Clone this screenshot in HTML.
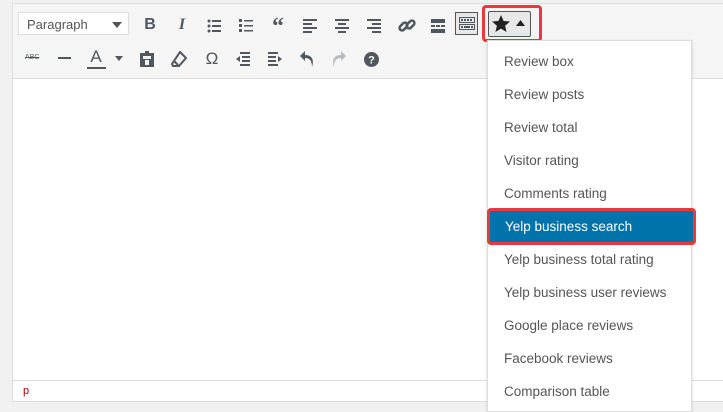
<!DOCTYPE html>
<html><head><style>
body{margin:0;width:723px;height:403px;background:#f1f1f1;position:relative;overflow:hidden;font-family:"Liberation Sans",sans-serif}
.ed{position:absolute;left:12px;top:3px;width:720px;height:397px;border:1px solid #ddd;background:#fff}
.tb{position:absolute;left:0;top:0;right:0;height:74px;background:#f5f5f5;border-bottom:1px solid #ddd}
.sel{position:absolute;left:5px;top:8px;width:111px;height:23px;background:#fff;border:1px solid #ddd;font-size:13px;color:#555;line-height:23px;padding-left:8px;box-sizing:border-box}
.sel:after{content:"";position:absolute;right:6px;top:9px;border:5px solid transparent;border-top:6px solid #555;border-bottom:0}
.i{position:absolute;color:#50575e;font-size:16px;text-align:center;width:24px;line-height:20px}
svg{position:absolute}
.st{position:absolute;left:0;right:0;top:376px;border-top:1px solid #ddd;height:20px;font-size:11px;color:#a00;padding-left:10px;line-height:20px}
.dd{position:absolute;left:487px;top:40px;width:203px;height:370px;background:#fff;border:1px solid #ddd;box-shadow:0 1px 3px rgba(0,0,0,.15)}
.it{height:33px;line-height:33px;padding-left:16px;font-size:13.5px;color:#555}
.hl{background:#0073aa;color:#fff;outline:3px solid #e9383f;outline-offset:-1px;position:relative;margin-left:1px;margin-right:-3px;border-radius:2px}
</style></head><body>
<div class="ed">
<div class="tb">
<div class="sel">Paragraph</div>
<div class="i" style="left:125px;top:11px;font-weight:bold">B</div>
<div class="i" style="left:157px;top:11px;font-style:italic;font-family:'Liberation Serif';font-weight:bold">I</div>
<svg style="left:194px;top:15px" width="14" height="14"><g fill="#50575e"><circle cx="2" cy="2" r="1.5"/><circle cx="2" cy="7" r="1.5"/><circle cx="2" cy="12" r="1.5"/><rect x="5" y="1" width="9" height="2"/><rect x="5" y="6" width="9" height="2"/><rect x="5" y="11" width="9" height="2"/></g></svg>
<svg style="left:226px;top:15px" width="14" height="14"><g fill="#50575e"><rect x="0" y="0" width="3" height="3"/><rect x="0" y="5" width="3" height="3"/><rect x="0" y="10" width="3" height="3"/><rect x="5" y="1" width="9" height="1.5"/><rect x="5" y="6" width="9" height="1.5"/><rect x="5" y="11" width="9" height="1.5"/></g></svg>
<div class="i" style="left:253px;top:13px;font-weight:bold;font-size:24px;font-family:'Liberation Serif'">“</div>
<svg style="left:290px;top:15px" width="14" height="14"><g fill="#50575e"><rect y="0" width="14" height="2"/><rect y="4" width="9" height="2"/><rect y="8" width="14" height="2"/><rect y="12" width="9" height="2"/></g></svg>
<svg style="left:322px;top:15px" width="14" height="14"><g fill="#50575e"><rect y="0" width="14" height="2"/><rect x="3" y="4" width="8" height="2"/><rect y="8" width="14" height="2"/><rect x="3" y="12" width="8" height="2"/></g></svg>
<svg style="left:354px;top:15px" width="14" height="14"><g fill="#50575e"><rect y="0" width="14" height="2"/><rect x="5" y="4" width="9" height="2"/><rect y="8" width="14" height="2"/><rect x="5" y="12" width="9" height="2"/></g></svg>
<svg style="left:385px;top:13px" width="18" height="18"><g fill="none" stroke="#50575e" stroke-width="2.5"><rect x="1" y="7" width="9" height="5" rx="2.5" transform="rotate(-45 5.5 9.5)"/><rect x="8" y="5" width="9" height="5" rx="2.5" transform="rotate(-45 12.5 7.5)"/></g></svg>
<svg style="left:418px;top:15px" width="14" height="14"><g fill="#50575e"><rect y="0" width="14" height="4"/><rect y="6" width="4" height="2"/><rect x="5" y="6" width="4" height="2"/><rect x="10" y="6" width="4" height="2"/><rect y="10" width="14" height="4"/></g></svg>
<div style="position:absolute;left:442px;top:8px;width:23px;height:23px;border:1px solid #555;background:#e8e8e8;box-sizing:border-box"></div>
<svg style="left:446px;top:13px" width="16" height="14"><g fill="none" stroke="#50575e"><rect x=".5" y=".5" width="15" height="5"/><rect x=".5" y="7.5" width="15" height="5"/></g><g fill="#50575e"><rect x="2" y="2" width="2" height="2"/><rect x="5" y="2" width="2" height="2"/><rect x="8" y="2" width="2" height="2"/><rect x="11" y="2" width="2" height="2"/><rect x="2" y="9" width="2" height="2"/><rect x="5" y="9" width="6" height="2"/><rect x="12" y="9" width="2" height="2"/></g></svg>
<div style="position:absolute;left:469px;top:1px;width:60px;height:37px;border:3px solid #e9383f;border-radius:4px;box-sizing:border-box"></div>
<div style="position:absolute;left:475px;top:7px;width:43px;height:26px;border:1px solid #555;border-radius:2px;background:#e8e8e8;box-sizing:border-box"></div>
<svg style="left:478px;top:10px" width="20" height="20"><path d="M10 1l2.6 6 6.4.5-4.9 4.2 1.5 6.3L10 14.6 4.4 18l1.5-6.3L1 7.5l6.4-.5z" fill="#222"/></svg>
<svg style="left:503px;top:16px" width="9" height="6"><path d="M0 6L4.5 0 9 6z" fill="#222"/></svg>
<div style="position:absolute;left:12px;top:50px;font-size:7px;color:#50575e;text-decoration:line-through">ABC</div>
<div style="position:absolute;left:45px;top:53px;width:13px;height:2px;background:#50575e"></div>
<div class="i" style="left:71px;top:43px;font-size:17px">A</div>
<div style="position:absolute;left:74px;top:63px;width:19px;height:2px;background:#50575e"></div>
<svg style="left:102px;top:52px" width="8" height="5"><path d="M0 0h8L4 5z" fill="#50575e"/></svg>
<svg style="left:127px;top:47px" width="14" height="16"><path d="M5 0h4v2h5v14H0V2h5zM3 5v3h8V5zM5 9v5h4V9z" fill="#50575e" fill-rule="evenodd"/></svg>
<svg style="left:158px;top:47px" width="16" height="16"><path d="M9 1l6 6-7 8-6 0-1-2 8-12zM3 10l4 4" fill="none" stroke="#50575e" stroke-width="2"/></svg>
<div class="i" style="left:187px;top:45px;font-size:17px">Ω</div>
<svg style="left:223px;top:48px" width="14" height="14"><g fill="#50575e"><rect x="4" width="10" height="2"/><rect x="6" y="4" width="8" height="2"/><rect x="6" y="8" width="8" height="2"/><rect x="4" y="12" width="10" height="2"/><path d="M0 7l4-3v6z"/></g></svg>
<svg style="left:255px;top:48px" width="14" height="14"><g fill="#50575e"><rect width="10" height="2"/><rect y="4" width="8" height="2"/><rect y="8" width="8" height="2"/><rect y="12" width="10" height="2"/><path d="M14 7l-4-3v6z"/></g></svg>
<svg style="left:286px;top:46px" width="16" height="18"><path d="M6 1L1 6l5 5V8c4 0 7 2 7 9 2-6 1-12-7-12z" fill="#50575e"/></svg>
<svg style="left:318px;top:46px" width="16" height="18"><path d="M10 1l5 5-5 5V8c-4 0-7 2-7 9-2-6-1-12 7-12z" fill="#b8bcc0"/></svg>
<svg style="left:351px;top:48px" width="15" height="15"><circle cx="7.5" cy="7.5" r="7.5" fill="#50575e"/><text x="7.5" y="11.5" font-size="11" font-weight="bold" fill="#fff" text-anchor="middle" font-family="Liberation Sans">?</text></svg>
</div>
<div class="st">p</div>
</div>
<div class="dd">
<div class="it" style="margin-top:4px">Review box</div>
<div class="it">Review posts</div>
<div class="it">Review total</div>
<div class="it">Visitor rating</div>
<div class="it">Comments rating</div>
<div class="it hl">Yelp business search</div>
<div class="it">Yelp business total rating</div>
<div class="it">Yelp business user reviews</div>
<div class="it">Google place reviews</div>
<div class="it">Facebook reviews</div>
<div class="it">Comparison table</div>
</div>
</body></html>
